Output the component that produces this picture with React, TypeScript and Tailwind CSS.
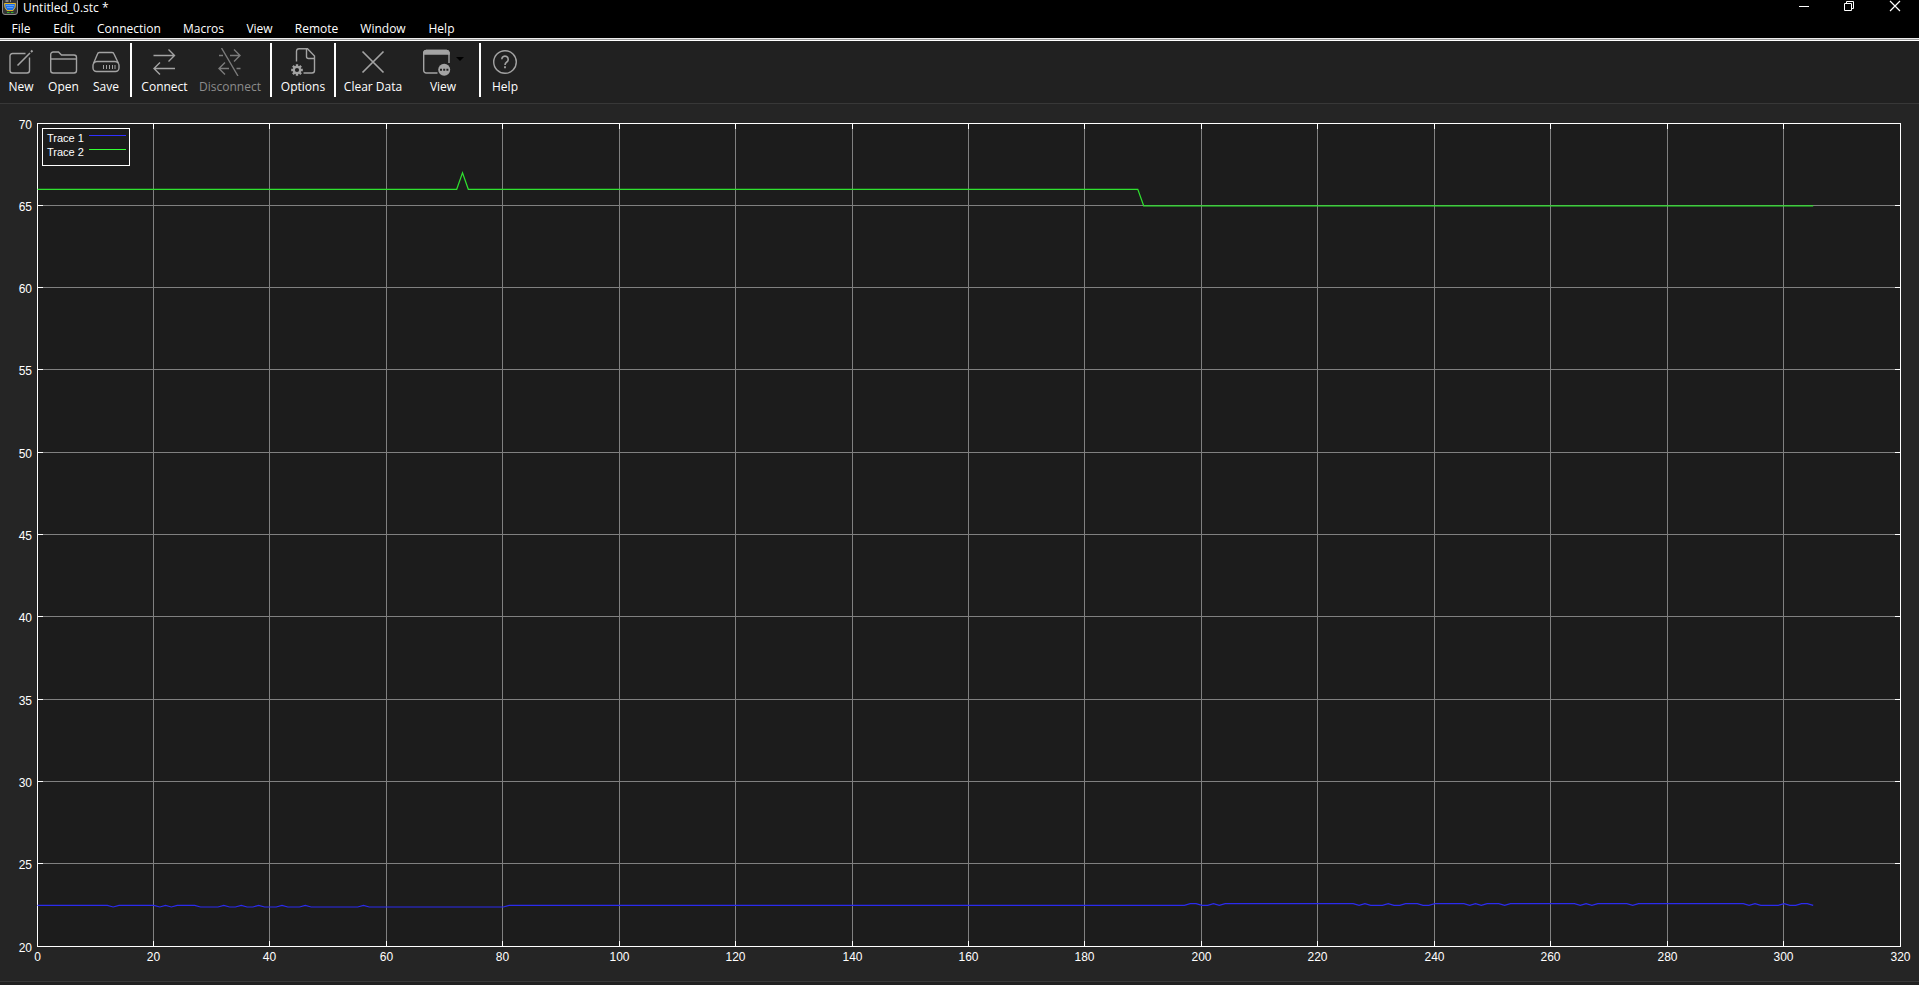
import { useLayoutEffect, useRef, useState } from "react";
import type { ReactNode } from "react";

type Point = [number, number];

const menus = [
  { label: "File", width: "w-[42px]" },
  { label: "Edit", width: "w-[44px]" },
  { label: "Connection", width: "w-[86px]" },
  { label: "Macros", width: "w-[63px]" },
  { label: "View", width: "w-[49px]" },
  { label: "Remote", width: "w-[65px]" },
  { label: "Window", width: "w-[68px]" },
  { label: "Help", width: "w-[49px]" },
];

const X_MAX = 320;
const Y_MIN = 20;
const Y_MAX = 70;
const xTicks = Array.from({ length: 17 }, (_, i) => i * 20);
const yTicks = Array.from({ length: 11 }, (_, i) => Y_MIN + i * 5);

const inRanges = (x: number, ranges: Point[]) =>
  ranges.some(([from, to]) => x >= from && x <= to);

const coolRanges: Point[] = [
  [13, 13], [21, 21], [23, 23], [28, 31], [33, 34], [36, 37],
  [39, 41], [43, 45], [47, 55], [57, 80],
];
const warmRanges: Point[] = [
  [198, 199], [202, 202], [204, 226], [228, 228], [232, 232], [235, 237],
  [240, 245], [247, 247], [249, 251], [253, 264], [266, 266], [268, 273],
  [275, 293], [295, 295], [300, 300], [303, 304],
];

const trace1: Point[] = Array.from({ length: 306 }, (_, x) => [
  x,
  inRanges(x, coolRanges) ? 22.4 : inRanges(x, warmRanges) ? 22.6 : 22.5,
]);
const trace2: Point[] = [
  [0, 66], [72, 66], [73, 67], [74, 66], [189, 66], [190, 65], [305, 65],
];

function Icon({ children, width = 28 }: { children: ReactNode; width?: number }) {
  return (
    <svg
      width={width}
      height={28}
      viewBox={`0 0 ${width} 28`}
      fill="none"
      stroke="#a3a3a3"
      strokeWidth={1.4}
      aria-hidden="true"
    >
      {children}
    </svg>
  );
}

const NewIcon = () => (
  <Icon>
    <path d="M18.500 5.500H5.500a2.500 2.500 0 0 0-2.500 2.500v14.500a2.500 2.500 0 0 0 2.500 2.500h14.500a2.500 2.500 0 0 0 2.500-2.500V9.500" />
    <path d="M10.500 17.500L23 5" strokeWidth={1.600} />
    <path d="M24 4l1.500-1.500" strokeWidth={2} />
  </Icon>
);
const OpenIcon = () => (
  <Icon>
    <path d="M.7 22.500V6.500A2.500 2.500 0 0 1 3.200 4h5.300l3 3H24a2.500 2.500 0 0 1 2.500 2.500v13A2.500 2.500 0 0 1 24 25H3.200a2.500 2.500 0 0 1-2.500-2.500z" />
    <path d="M.7 11h25.800" />
  </Icon>
);
const SaveIcon = () => (
  <Icon>
    <path d="M7.500 4.500h12.500a2 2 0 0 1 2 1.500l4.500 9.500a4 4 0 0 1 .5 2v2.500a3.500 3.500 0 0 1-3.500 3.500H4.500A3.500 3.500 0 0 1 1 20v-2.500a4 4 0 0 1 .500-2L5.500 6a2 2 0 0 1 2-1.500z" />
    <path d="M2 15q1-1.500 3-1.500h18q2 0 3 1.500" />
    <path d="M11.500 17v4M14.500 17v4M17.500 17v4M20.500 17v4M23 17v4" strokeWidth={1} />
  </Icon>
);
const ConnectIcon = () => (
  <Icon>
    <path d="M2.500 7.500h21M17.500 1.500l6 6-6 6M24 20.500H3M9 14.500l-6 6 6 6" />
  </Icon>
);
const DisconnectIcon = () => (
  <Icon>
    <path
      d="M3 7.500h4M14 7.500h10M18 1.500l6 6-6 6M24.500 20.500h-4M13 20.500H3M9 14.500l-6 6 6 6M5.500 0l16.500 28"
      stroke="#7b7b7b"
    />
  </Icon>
);
const OptionsIcon = () => (
  <Icon>
    <path d="M7.500 13.500V3A2.500 2.500 0 0 1 10 .700h8.500l7 7.300v14.500A2.500 2.500 0 0 1 23 25h-8.500" />
    <path d="M17.500.700v7.800q0 2 2 2h6" />
    <circle cx="8" cy="22" r="3.200" strokeWidth={2.200} />
    <path
      d="M8 16.200v2.200M8 25.600v2.200M2.200 22h2.200M11.600 22h2.200M3.900 17.900l1.600 1.600M10.500 24.500l1.600 1.600M3.900 26.100l1.600-1.600M10.500 19.500l1.600-1.600"
      strokeWidth={2.400}
    />
  </Icon>
);
const ClearIcon = () => (
  <Icon>
    <path d="M3.500 3.500l21 21M24.500 3.500l-21 21" strokeWidth={1.700} />
  </Icon>
);
const ViewIcon = () => (
  <Icon width={42}>
    <path d="M15.500 25H4.200a2.500 2.500 0 0 1-2.500-2.500V4.500A2.500 2.500 0 0 1 4.200 2.500h20.300A2.500 2.500 0 0 1 27 4.500V15" />
    <path d="M1.700 6V4.500A2.500 2.500 0 0 1 4.200 2.500h20.300A2.500 2.500 0 0 1 27 4.500V6z" fill="#a3a3a3" />
    <circle cx="22.200" cy="21.800" r="6" fill="#a3a3a3" stroke="none" />
    <path d="M18 20.800h2v2h-2zM21.200 20.800h2v2h-2zM24.400 20.800h2v2h-2z" fill="#212121" stroke="none" />
    <path d="M34 9h8l-4 4z" fill="#000" stroke="none" />
  </Icon>
);
const HelpIcon = () => (
  <Icon>
    <circle cx="14" cy="14" r="11.300" />
    <path d="M10.800 11.200a3.200 3.200 0 1 1 5 2.800q-1.800 1.200-1.800 3" strokeWidth={1.600} />
    <path d="M14 18.300v2" strokeWidth={1.800} />
  </Icon>
);

function Tool({
  label,
  icon,
  width,
  disabled = false,
}: {
  label: string;
  icon: ReactNode;
  width: string;
  disabled?: boolean;
}) {
  return (
    <button
      type="button"
      disabled={disabled}
      className={`flex shrink-0 flex-col items-center gap-[3px] pt-[7px] whitespace-nowrap text-white disabled:text-[#8c8c8c] ${width}`}
    >
      {icon}
      <span className="leading-4">{label}</span>
    </button>
  );
}

const Separator = ({ className = "" }: { className?: string }) => (
  <div className={`mt-[2px] h-[54px] w-[2px] shrink-0 bg-white ${className}`} />
);

function Chart() {
  const host = useRef<HTMLDivElement>(null);
  const [size, setSize] = useState({ width: 0, height: 0 });

  useLayoutEffect(() => {
    const node = host.current;
    if (!node) return;
    const measure = () => setSize({ width: node.clientWidth, height: node.clientHeight });
    measure();
    const observer = new ResizeObserver(measure);
    observer.observe(node);
    return () => observer.disconnect();
  }, []);

  const left = 37;
  const top = 19;
  const right = size.width - 19;
  const bottom = size.height - 35;
  const px = (x: number) => left + (x / X_MAX) * (right - left);
  const py = (y: number) => bottom - ((y - Y_MIN) / (Y_MAX - Y_MIN)) * (bottom - top);
  const snap = (v: number) => Math.floor(v + 0.01) + 0.5;
  const line = (points: Point[]) =>
    points.map(([x, y]) => `${(px(x) + 0.5).toFixed(1)},${(py(y) + 0.5).toFixed(1)}`).join(" ");

  return (
    <main ref={host} className="min-h-0 flex-1 overflow-hidden bg-[#252525]">
      {size.width > 0 && (
        <svg
          width={size.width}
          height={size.height}
          className="block font-['Liberation_Sans',Arial,sans-serif] text-[12px]"
          role="img"
          aria-label="Trace chart"
        >
          <rect x={left} y={top} width={right - left} height={bottom - top} fill="#1c1c1c" />
          <g stroke="#808080">
            {xTicks.map((t) => (
              <line key={t} x1={snap(px(t))} x2={snap(px(t))} y1={top} y2={bottom} />
            ))}
            {yTicks.map((t) => (
              <line key={t} x1={left} x2={right} y1={snap(py(t))} y2={snap(py(t))} />
            ))}
          </g>
          <g stroke="#fff" fill="none">
            <rect x={left + 0.5} y={top + 0.5} width={right - left} height={bottom - top} />
            {xTicks.map((t) => (
              <path
                key={t}
                d={`M${snap(px(t))} ${top}v6M${snap(px(t))} ${bottom + 1}v-6`}
              />
            ))}
            {yTicks.map((t) => (
              <path
                key={t}
                d={`M${left} ${snap(py(t))}h6M${right + 1} ${snap(py(t))}h-6`}
              />
            ))}
          </g>
          <polyline points={line(trace1)} fill="none" stroke="#2b2bee" strokeWidth={1.200} />
          <polyline points={line(trace2)} fill="none" stroke="#2fe12f" strokeWidth={1.200} />
          <g fill="#fff">
            {xTicks.map((t) => (
              <text key={t} x={snap(px(t))} y={bottom + 15} textAnchor="middle">
                {t}
              </text>
            ))}
            {yTicks.map((t) => (
              <text key={t} x={left - 5} y={Math.floor(py(t) + 0.01) + 6} textAnchor="end">
                {t}
              </text>
            ))}
          </g>
          <g>
            <rect x={left + 5.5} y={top + 5.5} width={87} height={37} fill="#1c1c1c" stroke="#fff" />
            <text x={left + 10} y={top + 19} fill="#fff" fontSize={11}>
              Trace 1
            </text>
            <text x={left + 10} y={top + 33} fill="#fff" fontSize={11}>
              Trace 2
            </text>
            <path d={`M${left + 52} ${top + 12.5}h37`} stroke="#3030ff" />
            <path d={`M${left + 52} ${top + 26.5}h37`} stroke="#33ff33" />
          </g>
        </svg>
      )}
    </main>
  );
}

export default function App() {
  return (
    <div className="flex h-screen flex-col overflow-hidden bg-[#212121] font-['Open_Sans','Noto_Sans',sans-serif] text-[12px] text-white">
      <header className="bg-black">
        <div className="flex h-4 items-start justify-between">
          <div className="flex items-start gap-[5px] pl-[2px]">
            <svg width={16} height={16} viewBox="0 0 16 16" aria-hidden="true">
              <rect x=".5" y="-2" width="15" height="16.500" rx="2.500" fill="#333" stroke="#8a8a8a" />
              <path d="M3.500 1h3M8 1h1" stroke="#ddd" />
              <path d="M2.500 3.500h11l-.5 4-2 3H5l-2-3z" fill="#1e6fe8" stroke="#e3b52a" />
              <path d="M4.500 5.500h1M6.500 5.500h1M8.500 5.500h1M10.500 5.500h1M5.500 7.500h1M7.500 7.500h1M9.500 7.500h1" stroke="#9fd2ff" />
              <path d="M5 12.500h2.500M9 12.500h2.500" stroke="#35b52c" />
            </svg>
            <h1 className="leading-4">Untitled_0.stc *</h1>
          </div>
          <div className="flex pr-px">
            <button type="button" aria-label="Minimize" className="flex h-4 w-[45px] justify-center">
              <svg width={12} height={12} viewBox="0 0 12 12" stroke="#fff" fill="none">
                <path d="M1 6.500h10" />
              </svg>
            </button>
            <button type="button" aria-label="Restore" className="flex h-4 w-[46px] justify-center">
              <svg width={12} height={12} viewBox="0 0 12 12" stroke="#fff" fill="none">
                <path d="M1.500 3.500h7v7h-7zM3.500 3.500v-2h7v7h-2" />
              </svg>
            </button>
            <button type="button" aria-label="Close" className="flex h-4 w-[46px] justify-center">
              <svg width={12} height={12} viewBox="0 0 12 12" stroke="#fff" strokeWidth={1.200} fill="none">
                <path d="M1 1l10 10M11 1L1 11" />
              </svg>
            </button>
          </div>
        </div>
        <nav className="flex h-[22px] items-center pt-1">
          {menus.map((m) => (
            <button key={m.label} type="button" className={`flex shrink-0 justify-center leading-4 ${m.width}`}>
              {m.label}
            </button>
          ))}
        </nav>
        <div className="h-px bg-[#ebebeb]" />
        <div className="h-px bg-[#a0a0a0]" />
        <div className="h-px bg-white" />
      </header>

      <div role="toolbar" className="flex h-[63px] shrink-0 items-start border-b border-[#383838] bg-[#212121]">
        <Tool label="New" width="w-[42px]" icon={<NewIcon />} />
        <Tool label="Open" width="w-[43px]" icon={<OpenIcon />} />
        <Tool label="Save" width="w-[42px]" icon={<SaveIcon />} />
        <Separator className="ml-[3px]" />
        <Tool label="Connect" width="w-[65px]" icon={<ConnectIcon />} />
        <Tool label="Disconnect" width="w-[66px]" icon={<DisconnectIcon />} disabled />
        <Separator className="ml-[7px]" />
        <Tool label="Options" width="w-[62px]" icon={<OptionsIcon />} />
        <Separator />
        <Tool label="Clear Data" width="w-[74px]" icon={<ClearIcon />} />
        <Tool label="View" width="w-[66px]" icon={<ViewIcon />} />
        <Separator className="ml-[3px]" />
        <Tool label="Help" width="w-[48px]" icon={<HelpIcon />} />
      </div>

      <Chart />

      <footer className="h-[4px] shrink-0 border-t border-[#383838] bg-[#212121]" />
    </div>
  );
}
